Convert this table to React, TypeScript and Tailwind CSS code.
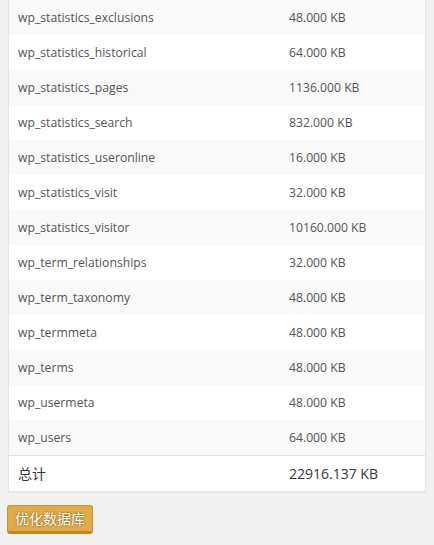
const tables: [string, string][] = [
  ['wp_statistics_exclusions', '48.000 KB'],
  ['wp_statistics_historical', '64.000 KB'],
  ['wp_statistics_pages', '1136.000 KB'],
  ['wp_statistics_search', '832.000 KB'],
  ['wp_statistics_useronline', '16.000 KB'],
  ['wp_statistics_visit', '32.000 KB'],
  ['wp_statistics_visitor', '10160.000 KB'],
  ['wp_term_relationships', '32.000 KB'],
  ['wp_term_taxonomy', '48.000 KB'],
  ['wp_termmeta', '48.000 KB'],
  ['wp_terms', '48.000 KB'],
  ['wp_usermeta', '48.000 KB'],
  ['wp_users', '64.000 KB'],
]

export default function App() {
  return (
    <div
      className="min-h-[545px] bg-[#f1f1f1] pl-2 pr-[8px]"
      style={{ fontFamily: '"Open Sans", "Noto Sans CJK SC", sans-serif' }}
    >
      {/* Table card */}
      <div className="w-[418px] bg-white border-x border-b border-[#e5e5e5] shadow-[0_1px_1px_rgba(0,0,0,0.04)]">
        {tables.map(([name, size], i) => (
          <div
            key={name}
            className={`flex h-[35px] items-center pt-[1px] text-[12.2px] text-[#555] ${i % 2 === 0 ? 'bg-[#f9f9f9]' : 'bg-white'}`}
          >
            <div className="w-[280px] pl-[9px]">{name}</div>
            <div>{size}</div>
          </div>
        ))}
        <div className="flex h-[36px] items-center border-t border-[#e1e1e1] text-[14px] text-[#32373c]">
          <div className="w-[280px] pl-[9px]">总计</div>
          <div>22916.137 KB</div>
        </div>
      </div>

      {/* Actions */}
      <div className="pt-[13px]">
        <button className="ml-[-1px] h-[29px] rounded-[3px] border border-[#c89233] border-b-[3px] border-b-[#c4861f] bg-[#e1a948] px-[7px] text-[14px] text-white [text-shadow:0_0_2px_#6b4a10]">
          优化数据库
        </button>
      </div>
    </div>
  )
}
